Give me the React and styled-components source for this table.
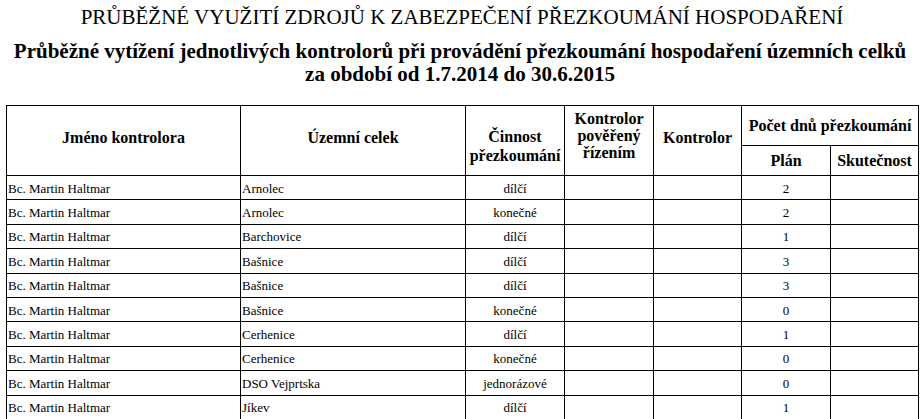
import React from 'react';
import styled, { createGlobalStyle } from 'styled-components';

const GlobalStyle = createGlobalStyle`
  html, body {
    margin: 0;
    padding: 0;
    background: #fff;
  }
  body {
    font-family: "Liberation Serif", "Times New Roman", serif;
    color: #000;
  }
`;

const Page = styled.div`
  padding: 4px 6px 0 6px;
`;

const Title = styled.h1`
  margin: 0;
  font-size: 21px;
  font-weight: normal;
  line-height: 26px;
  text-align: center;
`;

const Subtitle = styled.h2`
  margin: 10px 0 0 0;
  font-size: 21px;
  font-weight: bold;
  line-height: 23px;
  text-align: center;
  padding-right: 4px;
`;

const Table = styled.table`
  margin-top: 19px;
  width: 912px;
  border-collapse: collapse;
  table-layout: fixed;
  font-size: 13px;
`;

// $pad moves header text off the cell's middle, as in the source report
const Th = styled.th`
  border: 1px solid #000;
  font-size: 16px;
  font-weight: bold;
  line-height: ${(p) => p.$lh || '17px'};
  text-align: center;
  vertical-align: ${(p) => p.$valign || 'middle'};
  padding: ${(p) => p.$pad || '0 1px'};
  white-space: nowrap;
`;

const Row = styled.tr`
  height: 24.4px;
`;

const Td = styled.td`
  border: 1px solid #000;
  padding: 2px 1px 0 1px;
  text-align: ${(p) => (p.$center ? 'center' : 'left')};
  vertical-align: middle;
  white-space: nowrap;
`;

const rows = [
  { celek: 'Arnolec', cinnost: 'dílčí', plan: 2 },
  { celek: 'Arnolec', cinnost: 'konečné', plan: 2 },
  { celek: 'Barchovice', cinnost: 'dílčí', plan: 1 },
  { celek: 'Bašnice', cinnost: 'dílčí', plan: 3 },
  { celek: 'Bašnice', cinnost: 'dílčí', plan: 3 },
  { celek: 'Bašnice', cinnost: 'konečné', plan: 0 },
  { celek: 'Cerhenice', cinnost: 'dílčí', plan: 1 },
  { celek: 'Cerhenice', cinnost: 'konečné', plan: 0 },
  { celek: 'DSO Vejprtska', cinnost: 'jednorázové', plan: 0 },
  { celek: 'Jíkev', cinnost: 'dílčí', plan: 1 },
];

const App = () => {
  return (
    <Page>
      <GlobalStyle />
      <Title>PRŮBĚŽNÉ VYUŽITÍ ZDROJŮ K ZABEZPEČENÍ PŘEZKOUMÁNÍ HOSPODAŘENÍ</Title>
      <Subtitle>
        Průběžné vytížení jednotlivých kontrolorů při provádění přezkoumání hospodaření územních celků
        <br />
        za období od 1.7.2014 do 30.6.2015
      </Subtitle>
      <Table>
        <colgroup>
          <col style={{ width: 234 }} />
          <col style={{ width: 225 }} />
          <col style={{ width: 99 }} />
          <col style={{ width: 89 }} />
          <col style={{ width: 88 }} />
          <col style={{ width: 89 }} />
          <col style={{ width: 88 }} />
        </colgroup>
        <thead>
          <tr style={{ height: 40 }}>
            <Th rowSpan={2} $pad="0 1px 6px">Jméno kontrolora</Th>
            <Th rowSpan={2} $pad="0 1px 6px">Územní celek</Th>
            <Th rowSpan={2} $pad="10px 1px 0" $lh="19px">Činnost<br />přezkoumání</Th>
            <Th rowSpan={2} $valign="top" $pad="4px 0 0">Kontrolor<br />pověřený<br />řízením</Th>
            <Th rowSpan={2} $pad="0 1px 6px">Kontrolor</Th>
            <Th colSpan={2}>Počet dnů přezkoumání</Th>
          </tr>
          <tr style={{ height: 30 }}>
            <Th>Plán</Th>
            <Th>Skutečnost</Th>
          </tr>
        </thead>
        <tbody>
          {rows.map((r, i) => (
            <Row key={i}>
              <Td>Bc. Martin Haltmar</Td>
              <Td>{r.celek}</Td>
              <Td $center>{r.cinnost}</Td>
              <Td />
              <Td />
              <Td $center>{r.plan}</Td>
              <Td />
            </Row>
          ))}
        </tbody>
      </Table>
    </Page>
  );
};

export default App;
